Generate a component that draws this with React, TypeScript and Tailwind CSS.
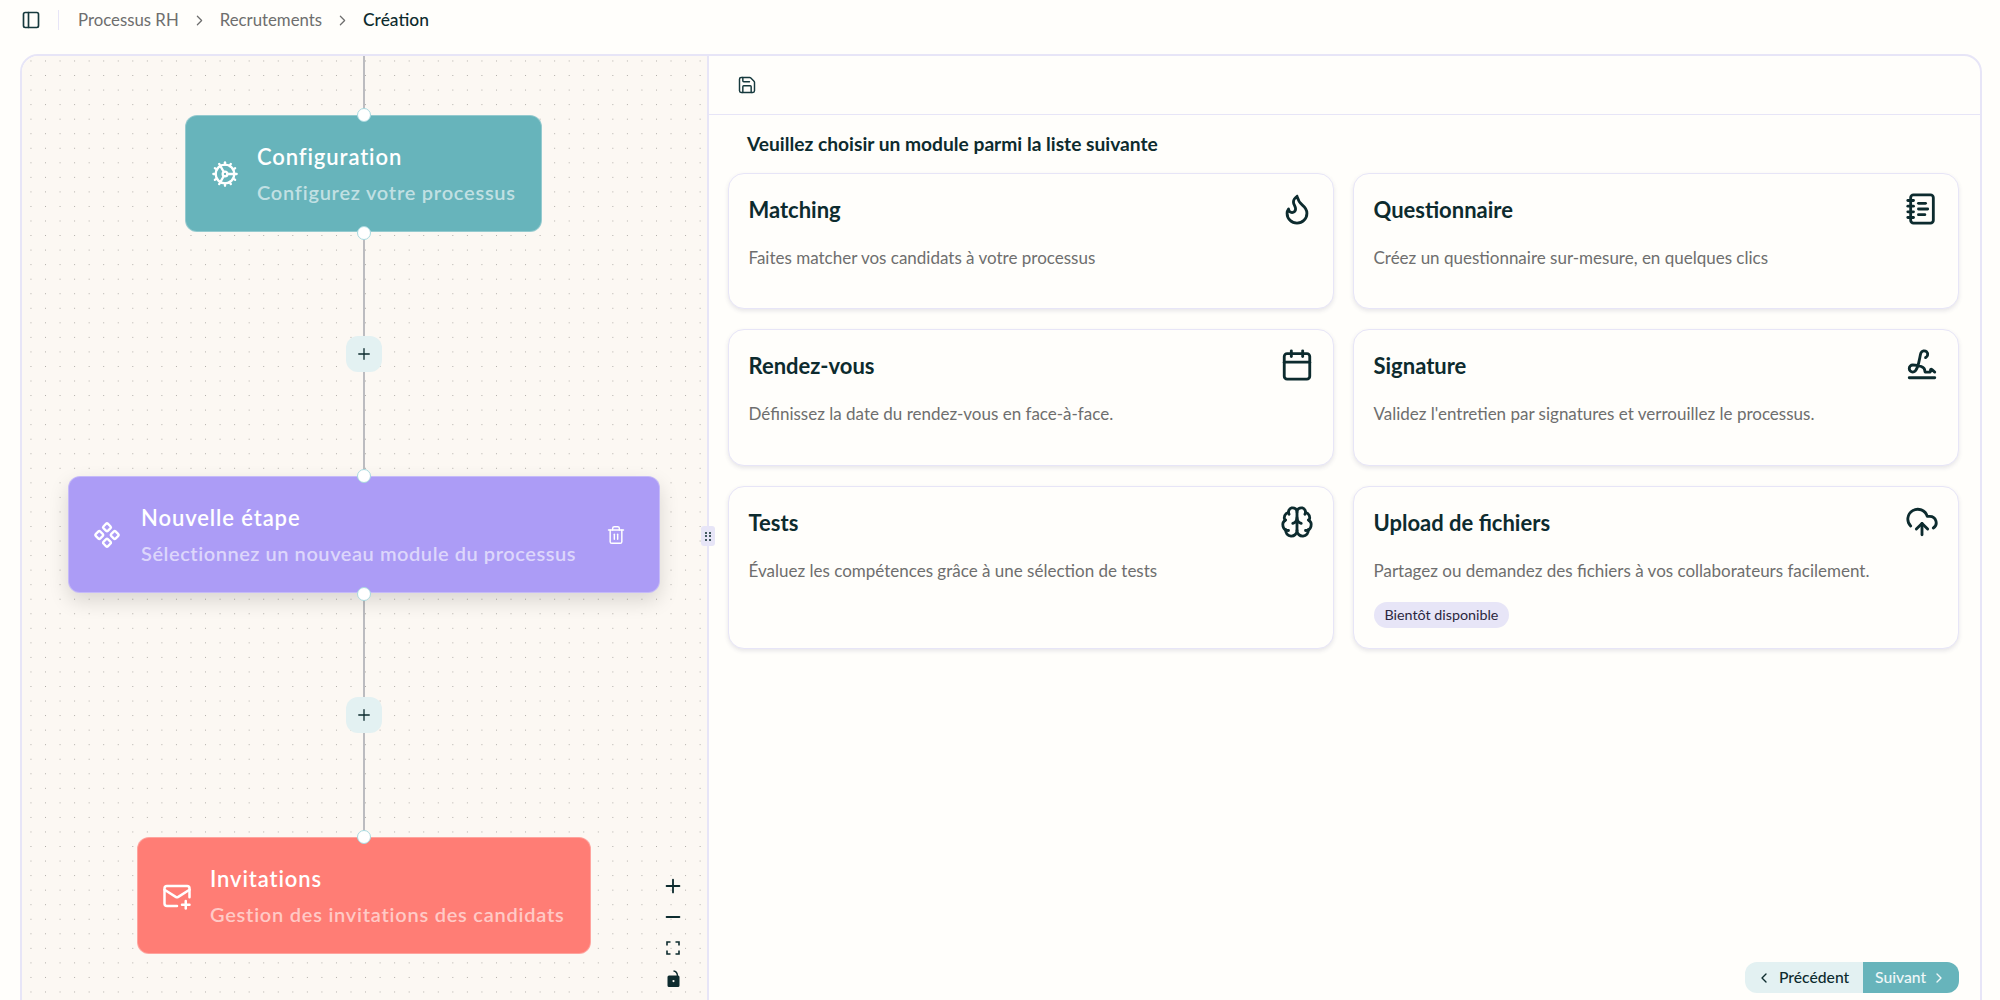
import type { ReactNode } from "react";
import {
  PanelLeft,
  ChevronRight,
  ChevronLeft,
  Save,
  Flame,
  NotebookText,
  Calendar,
  Signature,
  Brain,
  CloudUpload,
  Cog,
  Component,
  MailPlus,
  Trash2,
  Plus,
  Minus,
} from "lucide-react";

const modules = [
  {
    title: "Matching",
    text: "Faites matcher vos candidats à votre processus",
    icon: <Flame size={34} strokeWidth={2} />,
  },
  {
    title: "Questionnaire",
    text: "Créez un questionnaire sur-mesure, en quelques clics",
    icon: <NotebookText size={34} strokeWidth={2} />,
  },
  {
    title: "Rendez-vous",
    text: "Définissez la date du rendez-vous en face-à-face.",
    icon: <Calendar size={34} strokeWidth={2} />,
  },
  {
    title: "Signature",
    text: "Validez l'entretien par signatures et verrouillez le processus.",
    icon: <Signature size={34} strokeWidth={2} />,
  },
  {
    title: "Tests",
    text: "Évaluez les compétences grâce à une sélection de tests",
    icon: <Brain size={34} strokeWidth={2} />,
  },
  {
    title: "Upload de fichiers",
    text: "Partagez ou demandez des fichiers à vos collaborateurs facilement.",
    icon: <CloudUpload size={34} strokeWidth={2} />,
    soon: true,
  },
];

const Handle = ({ className }: { className: string }) => (
  <div
    className={`absolute left-1/2 -ml-[7px] w-[14px] h-[14px] rounded-full bg-white border border-[#a9d9df] ${className}`}
  />
);

const AddButton = ({ className }: { className: string }) => (
  <button
    className={`absolute left-[324px] w-[36px] h-[36px] rounded-[12px] bg-[#e3f1f2] flex items-center justify-center text-[#0d2b2e] ${className}`}
  >
    <Plus size={18} strokeWidth={1.75} />
  </button>
);

const Node = ({
  className,
  icon,
  title,
  subtitle,
  subClass = "tracking-[0.76px]",
  end,
  top = true,
  bottom = true,
}: {
  className: string;
  icon: ReactNode;
  title: string;
  subtitle: string;
  subClass?: string;
  end?: ReactNode;
  top?: boolean;
  bottom?: boolean;
}) => (
  <div
    className={`absolute rounded-[12px] border border-white/30 flex items-center text-white ${className}`}
  >
    {icon}
    <div className="flex flex-col gap-[13px] pt-[1px] min-w-0">
      <div className="text-[22px] leading-[22px] font-semibold tracking-[0.9px] whitespace-nowrap">{title}</div>
      <div className={`text-[20px] leading-[22px] font-semibold text-white/60 whitespace-nowrap ${subClass}`}>
        {subtitle}
      </div>
    </div>
    {end}
    {top && <Handle className="-top-[8px]" />}
    {bottom && <Handle className="-bottom-[9px]" />}
  </div>
);

export default function App() {
  return (
    <div className="h-[1000px] overflow-hidden bg-[#fffefb] font-['Lato',sans-serif] text-[#0d2b2e]">
      {/* HEADER */}
      <header className="h-[54px] flex items-start pt-[10px] pl-[21px]">
        <PanelLeft size={20} strokeWidth={2} className="text-[#16393d]" />
        <div className="w-px h-[20px] bg-[#e7e5f7] ml-[17px] mr-[19px]" />
        <nav className="flex items-center h-[20px] text-[16.8px] text-[#6e6e6e]">
          <span>Processus RH</span>
          <ChevronRight size={17} strokeWidth={1.75} className="mx-[12px]" />
          <span>Recrutements</span>
          <ChevronRight size={17} strokeWidth={1.75} className="mx-[12px]" />
          <span className="text-[17.4px] text-[#0d2b2e] font-medium">Création</span>
        </nav>
      </header>

      <main className="ml-[20px] w-[1962px] h-[980px] flex rounded-[18px] border-2 border-[#e7e5f7] overflow-hidden">
        {/* CANVAS */}
        <section className="relative w-[687px] shrink-0 border-r-2 border-[#e7e5f7] bg-[#fcf8f3] bg-[radial-gradient(#aeaba6_0.7px,transparent_0.8px)] bg-[size:14.55px_14.55px] bg-[position:1.7px_-2.3px]">
          <div className="absolute left-[341px] top-0 w-[2px] h-[60px] bg-[#bcbcc0]" />
          <div className="absolute left-[341px] top-[175px] w-[2px] h-[245px] bg-[#bcbcc0]" />
          <div className="absolute left-[341px] top-[537px] w-[2px] h-[245px] bg-[#bcbcc0]" />

          <Node
            className="left-[163px] top-[59px] w-[357px] h-[117px] bg-[#67b4bb] pl-[25px]"
            icon={<Cog size={28} strokeWidth={2} className="mr-[18px] shrink-0" />}
            title="Configuration"
            subtitle="Configurez votre processus"
          />
          <AddButton className="top-[280px]" />
          <Node
            className="left-[46px] top-[420px] w-[592px] h-[117px] bg-[#ac9cf6] pl-[24px] shadow-[0_8px_20px_rgba(0,0,0,0.14)]"
            icon={<Component size={28} strokeWidth={2} className="mr-[20px] shrink-0" />}
            title="Nouvelle étape"
            subtitle="Sélectionnez un nouveau module du processus"
            subClass="tracking-[0.55px]"
            end={<Trash2 size={20} strokeWidth={1.75} className="absolute left-[537px] top-[48px]" />}
          />
          <AddButton className="top-[641px]" />
          <Node
            className="left-[115px] top-[781px] w-[454px] h-[117px] bg-[#ff7d75] pl-[24px]"
            icon={<MailPlus size={30} strokeWidth={2} className="mr-[18px] shrink-0" />}
            title="Invitations"
            subtitle="Gestion des invitations des candidats"
            bottom={false}
          />

          {/* CONTROLS */}
          <div className="absolute left-[640px] top-[814px] w-[22px] flex flex-col items-center text-[#0d2b2e]">
            <div className="h-[31px] flex items-center justify-center">
              <Plus size={22} strokeWidth={2} />
            </div>
            <div className="h-[31px] flex items-center justify-center">
              <Minus size={22} strokeWidth={2} />
            </div>
            <div className="h-[31px] flex items-center justify-center">
              <svg width="14" height="14" viewBox="0 0 14 14" fill="none" stroke="currentColor" strokeWidth="1.6">
                <path d="M1 4.5V1h3.5M9.5 1H13v3.5M13 9.5V13H9.5M4.5 13H1V9.5" />
              </svg>
            </div>
            <div className="h-[31px] flex items-center justify-center">
              <svg width="13" height="17" viewBox="0 0 13 17">
                <path d="M6.5 1C9 1.2 10.3 3 10.5 6" fill="none" stroke="currentColor" strokeWidth="1.4" />
                <path
                  fillRule="evenodd"
                  fill="currentColor"
                  d="M2 5.5h9a1.5 1.5 0 0 1 1.5 1.5v8.5A1.5 1.5 0 0 1 11 17H2a1.5 1.5 0 0 1-1.5-1.5V7A1.5 1.5 0 0 1 2 5.5zM6.5 10a1.1 1.1 0 1 0 0 2.2 1.1 1.1 0 0 0 0-2.2z"
                />
              </svg>
            </div>
          </div>

          {/* RESIZE GRIP */}
          <div className="absolute -right-[8px] top-[470px] z-10 w-[14px] h-[20px] rounded-[3px] bg-[#e7e5f7] flex items-center justify-center">
            <div className="grid grid-cols-2 gap-[1.5px]">
              {[0, 1, 2, 3, 4, 5].map((i) => (
                <span key={i} className="w-[2px] h-[2px] rounded-full bg-[#0d2b2e]" />
              ))}
            </div>
          </div>
        </section>

        {/* MODULES */}
        <section className="flex-1 flex flex-col min-w-0">
          <div className="h-[59px] shrink-0 border-b-[1.5px] border-[#e7e5f7] flex items-center pl-[28px]">
            <Save size={20} strokeWidth={1.75} className="text-[#16393d]" />
          </div>
          <h2 className="h-[58px] shrink-0 flex items-center pl-[38px] text-[19.2px] font-bold">
            Veuillez choisir un module parmi la liste suivante
          </h2>
          <div className="grid grid-cols-2 grid-rows-[136px_137px_163px] gap-x-[19px] gap-y-[20px] pl-[19px] pr-[21px]">
            {modules.map((m) => (
              <article
                key={m.title}
                className="rounded-[16px] border-[1.5px] border-[#e7e5f7] bg-[#fffefb] shadow-[0_2px_4px_rgba(60,60,100,0.12)] pl-[19.5px] pr-[19px] pt-[17px]"
              >
                <div className="flex items-center justify-between h-[36px]">
                  <h3 className="text-[22px] font-bold">{m.title}</h3>
                  <span>{m.icon}</span>
                </div>
                <p className="mt-[19px] text-[17px] leading-[24px] text-[#6e6e6e]">{m.text}</p>
                {m.soon && (
                  <span className="inline-flex items-center h-[26px] mt-[19px] px-[11px] rounded-full bg-[#e7e5f7] text-[14.3px] text-[#2b2740]">
                    Bientôt disponible
                  </span>
                )}
              </article>
            ))}
          </div>

          {/* FOOTER */}
          <div className="mt-[313px] flex justify-end pr-[21px]">
            <div className="flex h-[31px] rounded-[12px] overflow-hidden text-[15.7px] font-medium">
              <button className="w-[118px] bg-[#e3f1f2] flex items-center gap-[7px] pl-[11px]">
                <ChevronLeft size={16} strokeWidth={2} />
                Précédent
              </button>
              <button className="w-[96px] bg-[#67b4bb] text-white/90 flex items-center gap-[5px] pl-[12px]">
                Suivant
                <ChevronRight size={16} strokeWidth={2} />
              </button>
            </div>
          </div>
        </section>
      </main>
    </div>
  );
}
